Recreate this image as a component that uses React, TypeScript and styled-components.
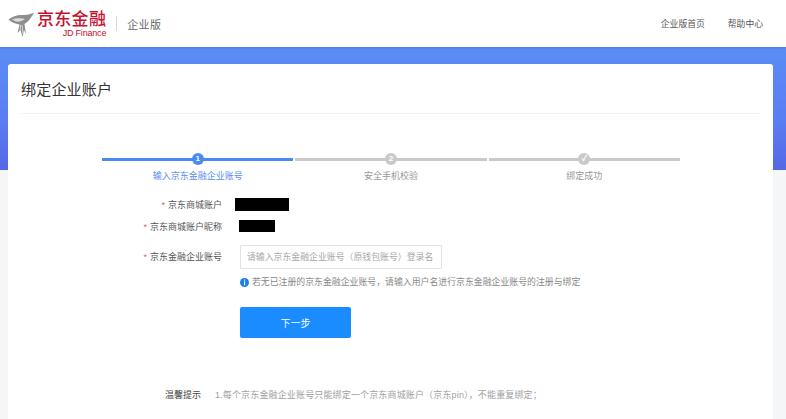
import React from 'react';
import styled, { createGlobalStyle } from 'styled-components';

const GlobalStyle = createGlobalStyle`
  html, body {
    margin: 0;
    padding: 0;
    height: 100%;
    overflow: hidden;
    background: #f5f6f8;
    font-family: "Liberation Sans", "Noto Sans CJK SC", sans-serif;
  }
`;

const Page = styled.div`
  width: 786px;
  height: 419px;
  overflow: hidden;
  display: flex;
  flex-direction: column;
`;

const Header = styled.header`
  height: 47px;
  flex: none;
  background: #fff;
  display: flex;
  align-items: center;
  justify-content: space-between;
  padding: 0 23px 0 8px;
  box-shadow: 0 1px 2px rgba(60, 80, 130, 0.35);
  position: relative;
  z-index: 1;
`;

const Brand = styled.div`
  display: flex;
  align-items: center;
`;

const LogoText = styled.div`
  display: flex;
  flex-direction: column;
  align-items: flex-end;
  margin-top: 1px;
`;

const LogoCn = styled.span`
  font-size: 17px;
  line-height: 17px;
  letter-spacing: 0.3px;
  color: #c8102e;
  font-weight: 500;
`;

const LogoEn = styled.span`
  font-size: 9px;
  line-height: 10px;
  letter-spacing: -0.2px;
  color: #c8102e;
`;

const Divider = styled.span`
  width: 1px;
  height: 15px;
  background: #d8d8d8;
  margin: 0 10px;
`;

const Edition = styled.span`
  font-size: 11px;
  color: #666;
  letter-spacing: 0.4px;
`;

const Nav = styled.nav`
  display: flex;
  gap: 23px;
`;

const NavLink = styled.a`
  font-size: 8.8px;
  color: #555;
`;

const Main = styled.main`
  flex: 1;
  min-height: 0;
  padding: 17px 13px 0 8px;
  background: linear-gradient(180deg, #5b8df5 0%, #5a7df3 60%, #5468e6 100%) top / 100% 123px no-repeat;
`;

const Card = styled.section`
  background: #fff;
  border-radius: 3px 3px 0 0;
  height: 100%;
  padding: 0 13px;
  box-sizing: border-box;
`;

const Title = styled.h1`
  margin: 0;
  height: 50px;
  box-sizing: border-box;
  line-height: 52px;
  font-size: 15px;
  letter-spacing: 0.2px;
  font-weight: 400;
  color: #333;
  border-bottom: 1px solid #f2f2f2;
`;

const Steps = styled.ol`
  list-style: none;
  margin: 41px 0 0 81px;
  padding: 0;
  display: flex;
  gap: 2px;
  width: 578px;
`;

const Step = styled.li`
  flex: 1;
  display: flex;
  flex-direction: column;
  align-items: center;
  position: relative;
`;

const StepBar = styled.div<{ $active?: boolean }>`
  width: 100%;
  height: 3.5px;
  margin-top: 2.5px;
  background: ${(p) => (p.$active ? '#4a8af4' : '#c9c9c9')};
`;

const StepDot = styled.span<{ $active?: boolean }>`
  position: absolute;
  top: -2px;
  left: 50%;
  margin-left: -6px;
  width: 12px;
  height: 12px;
  border-radius: 50%;
  background: ${(p) => (p.$active ? '#4a8af4' : '#c9c9c9')};
  color: #fff;
  font-size: 8px;
  font-weight: 700;
  line-height: 12px;
  text-align: center;
`;

const StepLabel = styled.span<{ $active?: boolean }>`
  margin-top: 8.5px;
  font-size: 9px;
  line-height: 12px;
  color: ${(p) => (p.$active ? '#5b8def' : '#999')};
`;

const Form = styled.div`
  margin-top: 12.5px;
  display: flex;
  flex-direction: column;
`;

const Row = styled.div<{ $height: number }>`
  display: flex;
  align-items: center;
  height: ${(p) => p.$height}px;
`;

const Label = styled.label`
  width: 201px;
  flex: none;
  text-align: right;
  font-size: 9px;
  line-height: 12px;
  color: #555;
`;

const Star = styled.span`
  color: #e0625f;
  margin-right: 3px;
`;

const Redacted = styled.span<{ $width: number; $height: number; $left: number; $lift?: number }>`
  display: block;
  width: ${(p) => p.$width}px;
  height: ${(p) => p.$height}px;
  margin-left: ${(p) => p.$left}px;
  margin-bottom: ${(p) => (p.$lift ?? 0) * 2}px;
  background: #000;
`;

const Input = styled.input`
  width: 202px;
  height: 24px;
  box-sizing: border-box;
  margin-left: 18px;
  padding: 0 6px;
  border: 1px solid #e2e2e2;
  border-radius: 1px;
  outline: none;
  font: 8.9px "Liberation Sans", "Noto Sans CJK SC", sans-serif;
  &::placeholder {
    color: #a8a8a8;
    opacity: 1;
  }
`;

const Hint = styled.p`
  margin: 0 0 0 219px;
  display: flex;
  align-items: center;
  gap: 3px;
  font-size: 8.9px;
  line-height: 13px;
  color: #888;
`;

const NextButton = styled.button`
  display: block;
  margin: 18px 0 0 219px;
  width: 111px;
  height: 31px;
  border: none;
  border-radius: 2px;
  background: #1a8cff;
  color: #fff;
  font: 10px "Liberation Sans", "Noto Sans CJK SC", sans-serif;
`;

const Tips = styled.div`
  margin: 51px 0 0 144px;
  display: flex;
  gap: 14px;
  font-size: 9px;
  line-height: 12px;
  white-space: nowrap;
`;

const TipsTitle = styled.span`
  color: #444;
`;

const TipsText = styled.span`
  color: #a0a0a0;
  letter-spacing: 0.15px;
`;

const Bird = () => (
  <svg width="29" height="28" viewBox="0 0 29 28">
    <path d="M0.5 9.5 C4 6.5 10 4.5 15 5 C19 5.5 23 3.5 26 3 L24 6 C22 9 20 12 16.5 14 L18 24 L16 20 L14.5 27 L12.5 20 L9.5 23 L11.5 14.5 C7 14 3 12 0.5 9.5 Z" fill="#8e8e8e" />
    <path d="M4 9.5 C8 8 13 8 17 9 C15 11 10 12 8 11.5 Z" fill="#dcdcdc" />
    <path d="M14 15 L15 24 M12.5 15 L12 22" stroke="#e6e6e6" strokeWidth="0.8" fill="none" />
  </svg>
);

const InfoIcon = () => (
  <svg width="9" height="9" viewBox="0 0 9 9">
    <circle cx="4.5" cy="4.5" r="4.5" fill="#1a7fe8" />
    <rect x="4" y="1.6" width="1.1" height="1.1" fill="#fff" />
    <rect x="4" y="3.4" width="1.1" height="3.8" fill="#fff" />
  </svg>
);

const App: React.FC = () => {
  return (
    <Page>
      <GlobalStyle />
      <Header>
        <Brand>
          <Bird />
          <LogoText>
            <LogoCn>京东金融</LogoCn>
            <LogoEn>JD Finance</LogoEn>
          </LogoText>
          <Divider />
          <Edition>企业版</Edition>
        </Brand>
        <Nav>
          <NavLink>企业版首页</NavLink>
          <NavLink>帮助中心</NavLink>
        </Nav>
      </Header>
      <Main>
        <Card>
          <Title>绑定企业账户</Title>
          <Steps>
            <Step>
              <StepBar $active />
              <StepDot $active>1</StepDot>
              <StepLabel $active>输入京东金融企业账号</StepLabel>
            </Step>
            <Step>
              <StepBar />
              <StepDot>2</StepDot>
              <StepLabel>安全手机校验</StepLabel>
            </Step>
            <Step>
              <StepBar />
              <StepDot>✓</StepDot>
              <StepLabel>绑定成功</StepLabel>
            </Step>
          </Steps>
          <Form>
            <Row $height={22}>
              <Label><Star>*</Star>京东商城账户</Label>
              <Redacted $width={54} $height={13} $left={13} $lift={0.5} />
            </Row>
            <Row $height={22}>
              <Label><Star>*</Star>京东商城账户昵称</Label>
              <Redacted $width={36} $height={12} $left={17} $lift={1.5} />
            </Row>
            <Row $height={38}>
              <Label><Star>*</Star>京东金融企业账号</Label>
              <Input placeholder="请输入京东金融企业账号（原钱包账号）登录名" />
            </Row>
            <Hint>
              <InfoIcon />
              若无已注册的京东金融企业账号，请输入用户名进行京东金融企业账号的注册与绑定
            </Hint>
            <NextButton>下一步</NextButton>
            <Tips>
              <TipsTitle>温馨提示</TipsTitle>
              <TipsText>1.每个京东金融企业账号只能绑定一个京东商城账户（京东pin），不能重复绑定；</TipsText>
            </Tips>
          </Form>
        </Card>
      </Main>
    </Page>
  );
};

export default App;
